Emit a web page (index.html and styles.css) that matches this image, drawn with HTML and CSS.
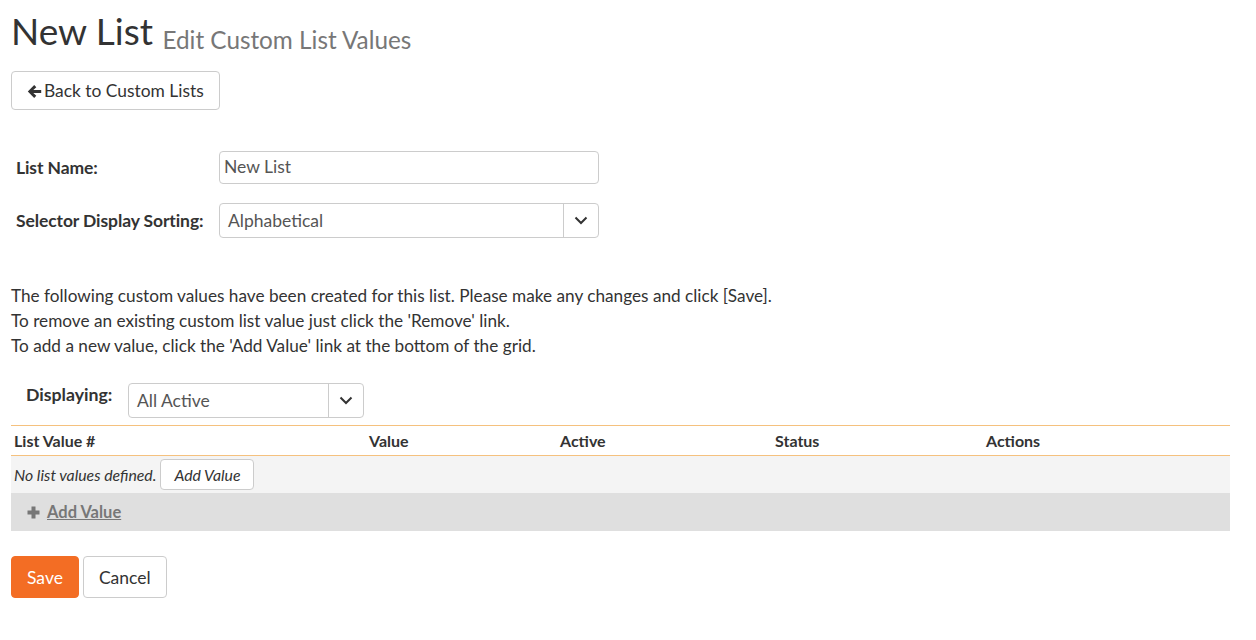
FILE: index.html
```html
<!DOCTYPE html>
<html>
<head>
<meta charset="utf-8">
<link rel="stylesheet" href="styles.css">
</head>
<body>
<div class="page">
  <h1 class="title">New List <small class="subtitle">Edit Custom List Values</small></h1>
  <button class="btn back-btn"><svg class="arrow" width="15" height="15" viewBox="0 0 15 15"><path d="M0.8 7.5 L7.2 1.1 L9.3 3.2 L6.3 6 H14.2 V9 H6.3 L9.3 11.8 L7.2 13.9 Z" fill="#333"/></svg>Back to Custom Lists</button>

  <div class="form">
    <div class="form-row">
      <label class="form-label">List Name:</label>
      <div class="input">New List</div>
    </div>
    <div class="form-row">
      <label class="form-label">Selector Display Sorting:</label>
      <div class="select wide">
        <span class="select-text">Alphabetical</span>
        <span class="select-arrow"><svg width="14" height="9" viewBox="0 0 14 9"><path d="M1.5 1.5 L7 7 L12.5 1.5" fill="none" stroke="#333" stroke-width="2"/></svg></span>
      </div>
    </div>
  </div>

  <div class="info">
    <p>The following custom values have been created for this list. Please make any changes and click [Save].</p>
    <p>To remove an existing custom list value just click the 'Remove' link.</p>
    <p>To add a new value, click the 'Add Value' link at the bottom of the grid.</p>
  </div>

  <div class="filter">
    <span class="filter-label">Displaying:</span>
    <div class="select narrow">
      <span class="select-text">All Active</span>
      <span class="select-arrow"><svg width="14" height="9" viewBox="0 0 14 9"><path d="M1.5 1.5 L7 7 L12.5 1.5" fill="none" stroke="#333" stroke-width="2"/></svg></span>
    </div>
  </div>

  <div class="grid">
    <div class="grid-head">
      <div class="col c1">List Value #</div>
      <div class="col c2">Value</div>
      <div class="col c3">Active</div>
      <div class="col c4">Status</div>
      <div class="col c5">Actions</div>
    </div>
    <div class="grid-empty">
      <em>No list values defined.</em>
      <button class="btn small-btn">Add Value</button>
    </div>
    <div class="grid-foot">
      <svg class="plus" width="13" height="13" viewBox="0 0 13 13"><path d="M4.5 0.5 H8.5 V4.5 H12.5 V8.5 H8.5 V12.5 H4.5 V8.5 H0.5 V4.5 H4.5 Z" fill="#777"/></svg>
      <a class="add-link">Add Value</a>
    </div>
  </div>

  <div class="actions">
    <button class="btn save-btn">Save</button>
    <button class="btn cancel-btn">Cancel</button>
  </div>
</div>
</body>
</html>
```

FILE: styles.css
```css
* { box-sizing: border-box; }
body {
  margin: 0;
  font-family: Lato, "Open Sans", sans-serif;
  color: #333;
  background: #fff;
}
.page {
  padding: 0 26px 0 11px;
}
.title {
  margin: 0;
  padding-top: 10px;
  font-size: 37px;
  font-weight: 400;
  line-height: 42px;
  color: #333;
}
.subtitle {
  font-size: 24.3px;
  color: #777;
  font-weight: 400;
  vertical-align: -4px;
}
.btn {
  font-family: Lato, sans-serif;
  background: #fff;
  border: 1px solid #ccc;
  border-radius: 4px;
  color: #333;
  cursor: pointer;
}
.back-btn {
  margin-top: 10px;
  display: flex;
  align-items: center;
  gap: 2px;
  height: 39px;
  padding: 0 15px 0 15px;
  font-size: 17.4px;
}
.arrow { margin-top: 1px; }
.form {
  margin-top: 41px;
  display: flex;
  flex-direction: column;
  gap: 19px;
}
.form-row {
  display: flex;
  align-items: center;
}
.form-label {
  width: 208px;
  padding-left: 5px;
  font-weight: 700;
  font-size: 17.5px;
  letter-spacing: -0.1px;
}
.input {
  width: 380px;
  height: 33px;
  border: 1px solid #ccc;
  border-radius: 4px;
  padding: 4px 4px;
  font-size: 17.5px;
  color: #555;
}
.select {
  display: flex;
  height: 35px;
  border: 1px solid #ccc;
  border-radius: 4px;
  font-size: 17.5px;
  color: #555;
}
.select.wide { width: 380px; }
.select.narrow { width: 236px; }
.select-text {
  flex: 1;
  padding: 6px 8px;
}
.select-arrow {
  width: 35px;
  border-left: 1px solid #ccc;
  display: flex;
  align-items: center;
  justify-content: center;
}
.info {
  margin-top: 45px;
  font-size: 17.2px;
  line-height: 25px;
}
.info p { margin: 0; }
.filter {
  margin-top: 25px;
  display: flex;
  align-items: flex-start;
}
.filter-label {
  width: 117px;
  padding-left: 15px;
  font-weight: 700;
  font-size: 17.7px;
  line-height: 24px;
}
.grid {
  margin-top: 7px;
  border-top: 1px solid #f5c17e;
}
.grid-head {
  display: flex;
  height: 30px;
  border-bottom: 1px solid #f5c17e;
  align-items: center;
  font-weight: 700;
  font-size: 16px;
  color: #333;
}
.col { padding-left: 3px; }
.c1 { width: 355px; }
.c2 { width: 191px; }
.c3 { width: 215px; }
.c4 { width: 211px; }
.c5 { flex: 1; }
.grid-empty {
  background: #f4f4f4;
  height: 37px;
  display: flex;
  align-items: center;
  padding-left: 3px;
  gap: 4px;
  font-size: 15.8px;
}
.small-btn {
  height: 31px;
  padding: 0 13px;
  font-size: 15.8px;
  font-style: italic;
}
.grid-foot {
  background: #dfdfdf;
  height: 38px;
  display: flex;
  align-items: center;
  padding-left: 16px;
  gap: 7px;
}
.add-link {
  font-size: 16.5px;
  font-weight: 700;
  color: #777;
  text-decoration: underline;
}
.actions {
  margin-top: 25px;
  display: flex;
  gap: 4px;
}
.save-btn {
  background: #f36d24;
  border-color: #f36d24;
  color: #fff;
  height: 42px;
  padding: 0 15px;
  font-size: 17.5px;
}
.cancel-btn {
  height: 42px;
  padding: 0 15px;
  font-size: 17.5px;
}
```
